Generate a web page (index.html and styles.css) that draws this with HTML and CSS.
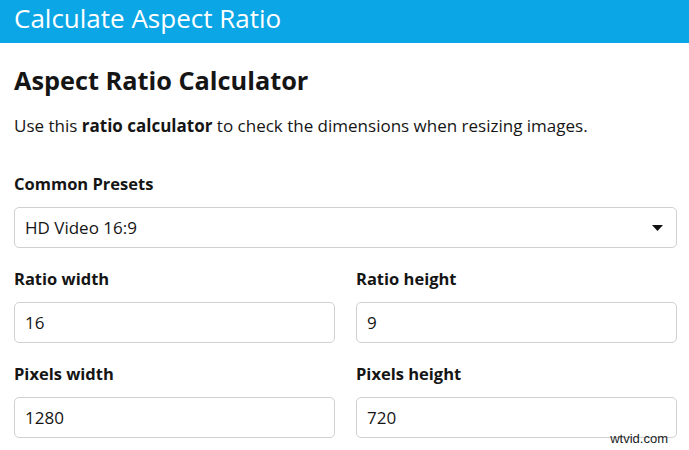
FILE: index.html
```html
<!DOCTYPE html>
<html>
<head>
<meta charset="utf-8">
<link rel="stylesheet" href="styles.css">
</head>
<body>
<header class="topbar">Calculate Aspect Ratio</header>
<main class="content">
  <h1 class="title">Aspect Ratio Calculator</h1>
  <p class="intro">Use this <b>ratio calculator</b> to check the dimensions when resizing images.</p>
  <div class="field presets">
    <label class="label">Common Presets</label>
    <div class="select">
      <span>HD Video 16:9</span>
      <svg class="caret" width="11" height="6" viewBox="0 0 11 6"><path d="M0 0h11L5.5 6z" fill="#111"/></svg>
    </div>
  </div>
  <div class="grid">
    <div class="field">
      <label class="label">Ratio width</label>
      <div class="input">16</div>
    </div>
    <div class="field">
      <label class="label">Ratio height</label>
      <div class="input">9</div>
    </div>
    <div class="field">
      <label class="label">Pixels width</label>
      <div class="input">1280</div>
    </div>
    <div class="field">
      <label class="label">Pixels height</label>
      <div class="input">720</div>
    </div>
  </div>
</main>
<div class="watermark">wtvid.com</div>
</body>
</html>
```
FILE: styles.css
```css
* { box-sizing: border-box; }
body {
  margin: 0;
  font-family: "Open Sans", "Noto Sans", sans-serif;
  color: #151515;
  background: #fff;
  width: 689px;
  height: 450px;
  overflow: hidden;
}
.topbar {
  background: #0aa6e6;
  color: #fff;
  height: 43px;
  font-size: 26px;
  line-height: 36px;
  padding-left: 14px;
}
.content {
  padding: 0 12px 0 14px;
}
.title {
  margin: 20px 0 0;
  font-size: 25.3px;
  font-weight: 700;
  line-height: 34px;
}
.intro {
  margin: 17px 0 0;
  font-size: 17px;
  line-height: 24px;
}
.field {
  display: flex;
  flex-direction: column;
}
.presets { margin-top: 34px; }
.label {
  font-size: 16.5px;
  font-weight: 700;
  line-height: 24px;
  margin-bottom: 11px;
}
.select, .input {
  height: 41px;
  border: 1px solid #d0d0d0;
  border-radius: 5px;
  font-size: 17px;
  line-height: 24px;
  padding: 0 11px 0 10px;
  display: flex;
  align-items: center;
}
.select { justify-content: space-between; padding-right: 13px; }
.grid {
  display: grid;
  grid-template-columns: 1fr 1fr;
  column-gap: 21px;
  row-gap: 19px;
  margin-top: 19px;
}
.watermark {
  position: absolute;
  right: 21px;
  top: 431px;
  font-family: "Liberation Sans", sans-serif;
  font-size: 13px;
  line-height: 15px;
  color: #222;
}
```
